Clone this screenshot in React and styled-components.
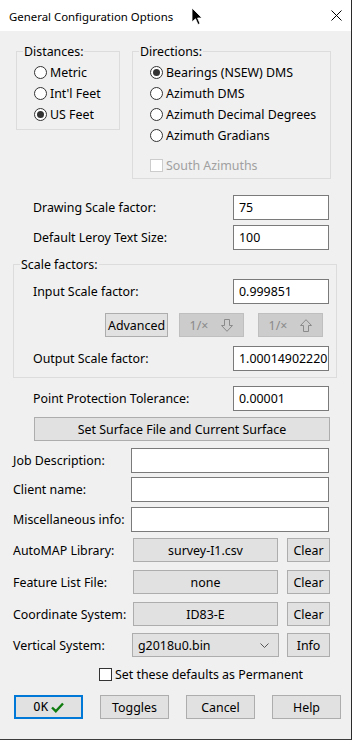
import React from 'react';
import styled, { createGlobalStyle } from 'styled-components';

const GlobalStyle = createGlobalStyle`
  html, body {
    margin: 0;
    padding: 0;
    background: #f0f0f0;
  }
  * {
    box-sizing: border-box;
  }
`;

const Window = styled.div`
  position: relative;
  width: 352px;
  height: 740px;
  display: flex;
  flex-direction: column;
  background: #f0f0f0;
  border-right: 1px solid #2a2a2a;
  border-bottom: 1px solid #3c3c3c;
  font: 12.4px 'Noto Sans', sans-serif;
  color: #000;
  overflow: hidden;
`;

const TitleBar = styled.div`
  height: 31px;
  flex: none;
  display: flex;
  align-items: center;
  justify-content: space-between;
  padding: 0 9px 0 9px;
  background: #fff;
`;

const Title = styled.span`
  font-size: 11.4px;
  margin-top: 1px;
`;

const Cursor = styled.svg`
  position: absolute;
  left: 191px;
  top: 7px;
`;

const GroupRow = styled.div`
  display: flex;
  align-items: flex-start;
  gap: 12px;
  margin-top: 20px;
  padding-left: 16px;
`;

const GroupBox = styled.div`
  position: relative;
  width: ${(p) => p.$w}px;
  height: ${(p) => p.$h}px;
  margin: ${(p) => p.$margin || '0'};
  border: 1px solid #dcdcdc;
  padding: ${(p) => p.$pad};
  flex: none;
`;

const Legend = styled.span`
  position: absolute;
  top: -8px;
  left: 6px;
  padding: 0 1px;
  line-height: 16px;
  background: #f0f0f0;
`;

const OptionRow = styled.div`
  display: flex;
  align-items: center;
  gap: 3px;
  height: ${(p) => p.$h || 21}px;
  margin-top: ${(p) => p.$mt || 0}px;
  padding-left: ${(p) => p.$pl || 0}px;
  color: ${(p) => (p.$disabled ? '#a0a0a0' : '#000')};
`;

const RadioDot = styled.span`
  width: 13px;
  height: 13px;
  flex: none;
  border-radius: 50%;
  border: 1px solid #333;
  background: #fff;
  display: grid;
  place-items: center;
  &::after {
    content: '';
    width: 7px;
    height: 7px;
    border-radius: 50%;
    background: ${(p) => (p.$on ? '#333' : 'transparent')};
  }
`;

const CheckBox = styled.span`
  width: 13px;
  height: 13px;
  flex: none;
  border: 1px solid ${(p) => (p.$disabled ? '#cccccc' : '#333')};
  background: #fff;
`;

const FieldRow = styled.div`
  display: flex;
  align-items: center;
  justify-content: space-between;
  height: ${(p) => p.$h || 25}px;
  margin-top: ${(p) => p.$mt || 0}px;
  padding: 0 ${(p) => (p.$pr === undefined ? 22 : p.$pr)}px 0 ${(p) => p.$pl || 0}px;
`;

const Edit = styled.div`
  width: ${(p) => p.$w}px;
  height: 100%;
  border: 1px solid #7a7a7a;
  background: #fff;
  padding: 0 0 0 5px;
  display: flex;
  align-items: center;
  white-space: nowrap;
  overflow: hidden;
`;

const Button = styled.div`
  width: ${(p) => (p.$w ? `${p.$w}px` : 'auto')};
  height: 24px;
  flex: none;
  margin-left: ${(p) => p.$ml || 0}px;
  display: flex;
  align-items: center;
  justify-content: center;
  gap: ${(p) => p.$gap || 0}px;
  background: ${(p) => (p.$disabled ? '#cccccc' : '#e1e1e1')};
  border: ${(p) => (p.$default ? '2px solid #0078d7' : `1px solid ${p.$disabled ? '#bfbfbf' : '#adadad'}`)};
  color: ${(p) => (p.$disabled ? '#8a8a8a' : '#000')};
  white-space: nowrap;
`;

const ButtonRow = styled.div`
  display: flex;
  align-items: center;
  height: 24px;
  margin-top: ${(p) => p.$mt || 0}px;
  padding-left: ${(p) => p.$pl || 0}px;
  gap: ${(p) => p.$gap || 0}px;
`;

const FileRow = styled.div`
  display: flex;
  align-items: center;
  height: 24px;
  margin-top: ${(p) => p.$mt || 0}px;
  padding-left: 13px;
`;

const FileLabel = styled.span`
  width: ${(p) => p.$w || 120}px;
  flex: none;
`;

const Select = styled.div`
  width: 147px;
  height: 24px;
  display: flex;
  align-items: center;
  justify-content: space-between;
  padding: 0 9px 0 5px;
  background: #e1e1e1;
  border: 1px solid #adadad;
`;

const OkText = styled.span`
  font: 12px 'DejaVu Sans Mono', monospace;
  letter-spacing: 0.5px;
`;

const DownArrow = () => (
  <svg width="12" height="13" viewBox="0 0 12 13">
    <path d="M3.5 0.5 H8.5 V6.5 H11.5 L6 12.3 L0.5 6.5 H3.5 Z" fill="none" stroke="#8a8a8a" strokeWidth="1" />
  </svg>
);

const UpArrow = () => (
  <svg width="12" height="13" viewBox="0 0 12 13">
    <path d="M3.5 12.5 H8.5 V6.5 H11.5 L6 0.7 L0.5 6.5 H3.5 Z" fill="none" stroke="#8a8a8a" strokeWidth="1" />
  </svg>
);

const Radio = ({ on, children }) => (
  <OptionRow>
    <RadioDot $on={on} />
    <span>{children}</span>
  </OptionRow>
);

const FileField = ({ label, value, action, mt }) => (
  <FileRow $mt={mt}>
    <FileLabel>{label}</FileLabel>
    <Button $w={145}>{value}</Button>
    <Button $w={43} $ml={9}>{action}</Button>
  </FileRow>
);

export default function App() {
  return (
    <>
      <GlobalStyle />
      <Window>
        <TitleBar>
          <Title>General Configuration Options</Title>
          <svg width="11" height="11" viewBox="0 0 11 11">
            <path d="M0.5 0.5 L10.5 10.5 M10.5 0.5 L0.5 10.5" stroke="#000" strokeWidth="1" />
          </svg>
        </TitleBar>
        <Cursor width="12" height="19" viewBox="0 0 12 19">
          <path d="M1 1 V15 L4.5 11.8 L7 17.5 L9 16.6 L6.6 11 H11 Z" fill="#000" stroke="#fff" strokeWidth="0.8" />
        </Cursor>

        <GroupRow>
          <GroupBox $w={104} $h={79} $pad="10px 0 0 17px">
            <Legend>Distances:</Legend>
            <Radio>Metric</Radio>
            <Radio>Int'l Feet</Radio>
            <Radio on>US Feet</Radio>
          </GroupBox>
          <GroupBox $w={199} $h={128} $pad="10px 0 0 17px">
            <Legend>Directions:</Legend>
            <Radio on>Bearings (NSEW) DMS</Radio>
            <Radio>Azimuth DMS</Radio>
            <Radio>Azimuth Decimal Degrees</Radio>
            <Radio>Azimuth Gradians</Radio>
            <OptionRow $mt={9} $disabled>
              <CheckBox $disabled />
              <span>South Azimuths</span>
            </OptionRow>
          </GroupBox>
        </GroupRow>

        <FieldRow $mt={16} $pl={33}>
          <span>Drawing Scale factor:</span>
          <Edit $w={96}>75</Edit>
        </FieldRow>
        <FieldRow $mt={5} $pl={33}>
          <span>Default Leroy Text Size:</span>
          <Edit $w={96}>100</Edit>
        </FieldRow>

        <GroupBox $h={114} $margin="14px 14px 0 13px" $pad="14px 0 0 0">
          <Legend>Scale factors:</Legend>
          <FieldRow $pl={19} $pr={7}>
            <span>Input Scale factor:</span>
            <Edit $w={96}>0.999851</Edit>
          </FieldRow>
          <ButtonRow $mt={9} $pl={91}>
            <Button $w={63}>Advanced</Button>
            <Button $w={65} $ml={11} $gap={13} $disabled>
              <span>1/×</span>
              <DownArrow />
            </Button>
            <Button $w={65} $ml={14} $gap={13} $disabled>
              <span>1/×</span>
              <UpArrow />
            </Button>
          </ButtonRow>
          <FieldRow $mt={9} $pl={19} $pr={7}>
            <span>Output Scale factor:</span>
            <Edit $w={96}>1.00014902220</Edit>
          </FieldRow>
        </GroupBox>

        <FieldRow $mt={8} $pl={33}>
          <span>Point Protection Tolerance:</span>
          <Edit $w={96}>0.00001</Edit>
        </FieldRow>
        <ButtonRow $mt={6} $pl={34}>
          <Button $w={296}>Set Surface File and Current Surface</Button>
        </ButtonRow>

        <FieldRow $mt={7} $pl={13}>
          <span>Job Description:</span>
          <Edit $w={198} />
        </FieldRow>
        <FieldRow $mt={4} $pl={13}>
          <span>Client name:</span>
          <Edit $w={198} />
        </FieldRow>
        <FieldRow $mt={5} $pl={13}>
          <span>Miscellaneous info:</span>
          <Edit $w={198} />
        </FieldRow>

        <FileField mt={6} label="AutoMAP Library:" value="survey-I1.csv" action="Clear" />
        <FileField mt={8} label="Feature List File:" value="none" action="Clear" />
        <FileField mt={8} label="Coordinate System:" value="ID83-E" action="Clear" />
        <FileRow $mt={7}>
          <FileLabel $w={119}>Vertical System:</FileLabel>
          <Select>
            <span>g2018u0.bin</span>
            <svg width="9" height="5" viewBox="0 0 9 5">
              <path d="M0.5 0.5 L4.5 4.5 L8.5 0.5" fill="none" stroke="#555" strokeWidth="1" />
            </svg>
          </Select>
          <Button $w={43} $ml={8}>Info</Button>
        </FileRow>

        <OptionRow $h={17} $mt={9} $pl={99}>
          <CheckBox />
          <span>Set these defaults as Permanent</span>
        </OptionRow>

        <ButtonRow $mt={12} $pl={14} $gap={17}>
          <Button $w={69} $default $gap={2}>
            <OkText>OK</OkText>
            <svg width="13" height="11" viewBox="0 0 13 11">
              <path d="M1 5.5 L4.8 9.2 L12 1.5" fill="none" stroke="#107c10" strokeWidth="2.4" />
            </svg>
          </Button>
          <Button $w={69}>Toggles</Button>
          <Button $w={69}>Cancel</Button>
          <Button $w={69}>Help</Button>
        </ButtonRow>
      </Window>
    </>
  );
}
